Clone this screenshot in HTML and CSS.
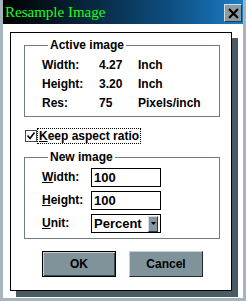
FILE: index.html
```html
<!DOCTYPE html>
<html lang="en">
<head>
    <meta charset="UTF-8">
    <title>Resample Image</title>
    <link rel="stylesheet" href="styles.css">
</head>
<body>
    <div class="window">
        <div class="titlebar">
            <span class="title">Resample Image</span>
            <button class="close-btn">
                <svg width="11" height="11" viewBox="0 0 11 11"><path d="M1 1 L10 10 M10 1 L1 10" stroke="#000" stroke-width="2.2"/></svg>
            </button>
        </div>

        <div class="client">
            <div class="panel">
                <fieldset class="group">
                    <legend>Active image</legend>
                    <div class="info-grid">
                        <span>Width:</span><span>4.27</span><span>Inch</span>
                        <span>Height:</span><span>3.20</span><span>Inch</span>
                        <span>Res:</span><span>75</span><span>Pixels/inch</span>
                    </div>
                </fieldset>

                <div class="check-row">
                    <span class="checkbox">
                        <svg width="10" height="10" viewBox="0 0 10 10"><path d="M1.5 4.5 L4 7.5 L8.5 1.5" fill="none" stroke="#000" stroke-width="1.6"/></svg>
                    </span>
                    <span class="check-label"><u>K</u>eep aspect ratio</span>
                </div>

                <fieldset class="group group-new">
                    <legend>New image</legend>
                    <div class="form-grid">
                        <label><u>W</u>idth:</label>
                        <div class="field">100</div>
                        <label><u>H</u>eight:</label>
                        <div class="field">100</div>
                        <label><u>U</u>nit:</label>
                        <div class="field select">
                            <span>Percent</span>
                            <span class="drop-btn">
                                <svg width="5" height="3" viewBox="0 0 5 3"><path d="M0 0 H5 L2.5 3 Z" fill="#000"/></svg>
                            </span>
                        </div>
                    </div>
                </fieldset>

                <div class="buttons">
                    <button class="btn btn-default">OK</button>
                    <button class="btn">Cancel</button>
                </div>
            </div>
        </div>
    </div>
</body>
</html>
```

FILE: styles.css
```css
body, html {
    margin: 0;
    padding: 0;
    background: #fff;
}
.window {
    width: 246px;
    height: 301px;
    box-sizing: border-box;
    border: 3px solid #a6b4bc;
    border-top: none;
    background: #fff;
    font-family: "Liberation Sans", Arial, sans-serif;
    font-size: 12px;
    font-weight: bold;
    color: #000;
}
.titlebar {
    height: 24px;
    display: flex;
    align-items: center;
    justify-content: space-between;
    padding: 0 1px 0 2px;
    background: linear-gradient(90deg, #000 0%, #06263c 35%, #0e4f82 70%, #1b7cc6 100%);
}
.title {
    font-family: "Liberation Serif", "Times New Roman", serif;
    font-size: 15px;
    font-weight: normal;
    color: #18ff18;
    margin-top: 1px;
}
.close-btn {
    width: 18px;
    height: 18px;
    padding: 0;
    margin-top: 2px;
    display: flex;
    align-items: center;
    justify-content: center;
    background: #8b9ba3;
    border: 1px solid;
    border-color: #d4dde2 #2c3a42 #2c3a42 #d4dde2;
}
.client {
    padding: 8px 0 0 7px;
}
.panel {
    width: 222px;
    height: 259px;
    box-sizing: border-box;
    border: 1px solid #000;
    background: #fff;
    box-shadow: 6px 6px 0 #4b5b63;
}
.group {
    width: 196px;
    box-sizing: border-box;
    margin: 5px 0 0 13px;
    padding: 3px 0 4px 17px;
    border: 1px solid #6d7d87;
}
.group legend {
    line-height: 14px;
    padding: 0 2px;
    margin-left: 6px;
}
.info-grid {
    display: grid;
    grid-template-columns: 57px 39px auto;
    grid-auto-rows: 19px;
    align-items: center;
}
.check-row {
    display: flex;
    align-items: center;
    height: 16px;
    margin: 11px 0 0 14px;
}
.checkbox {
    width: 10px;
    height: 10px;
    border: 1px solid #3e4e56;
    background: #fff;
    display: flex;
    align-items: center;
    justify-content: center;
}
.check-label {
    margin-left: 1px;
    padding: 0 1px;
    line-height: 14px;
    outline: 1px dotted #000;
    outline-offset: 0;
}
.group-new {
    margin-top: 6px;
    padding: 4px 0 5px 17px;
}
.form-grid {
    display: grid;
    grid-template-columns: 49px 70px;
    grid-auto-rows: 19px;
    row-gap: 4px;
    align-items: center;
}
.form-grid label {
    margin-top: -1px;
}
.field {
    height: 19px;
    box-sizing: border-box;
    border: 1px solid #000;
    padding-left: 2px;
    display: flex;
    align-items: center;
    font-size: 13px;
}
.select {
    justify-content: space-between;
    padding-right: 2px;
}
.drop-btn {
    width: 8px;
    height: 14px;
    background: #87979f;
    border: 1px solid;
    border-color: #d4dde2 #2c3a42 #2c3a42 #d4dde2;
    display: flex;
    align-items: center;
    justify-content: center;
}
.buttons {
    display: flex;
    gap: 13px;
    margin: 12px 0 0 31px;
}
.btn {
    width: 74px;
    height: 26px;
    padding: 0;
    font-family: "Liberation Sans", Arial, sans-serif;
    font-size: 12px;
    font-weight: bold;
    color: #000;
    background: #80929a;
    border: 1px solid;
    border-color: #c6d0d6 #1e2a30 #1e2a30 #c6d0d6;
}
.btn-default {
    border: 1px solid #000;
    box-shadow: inset 1px 1px 0 #c6d0d6, inset -1px -1px 0 #3a4a52;
}
```
